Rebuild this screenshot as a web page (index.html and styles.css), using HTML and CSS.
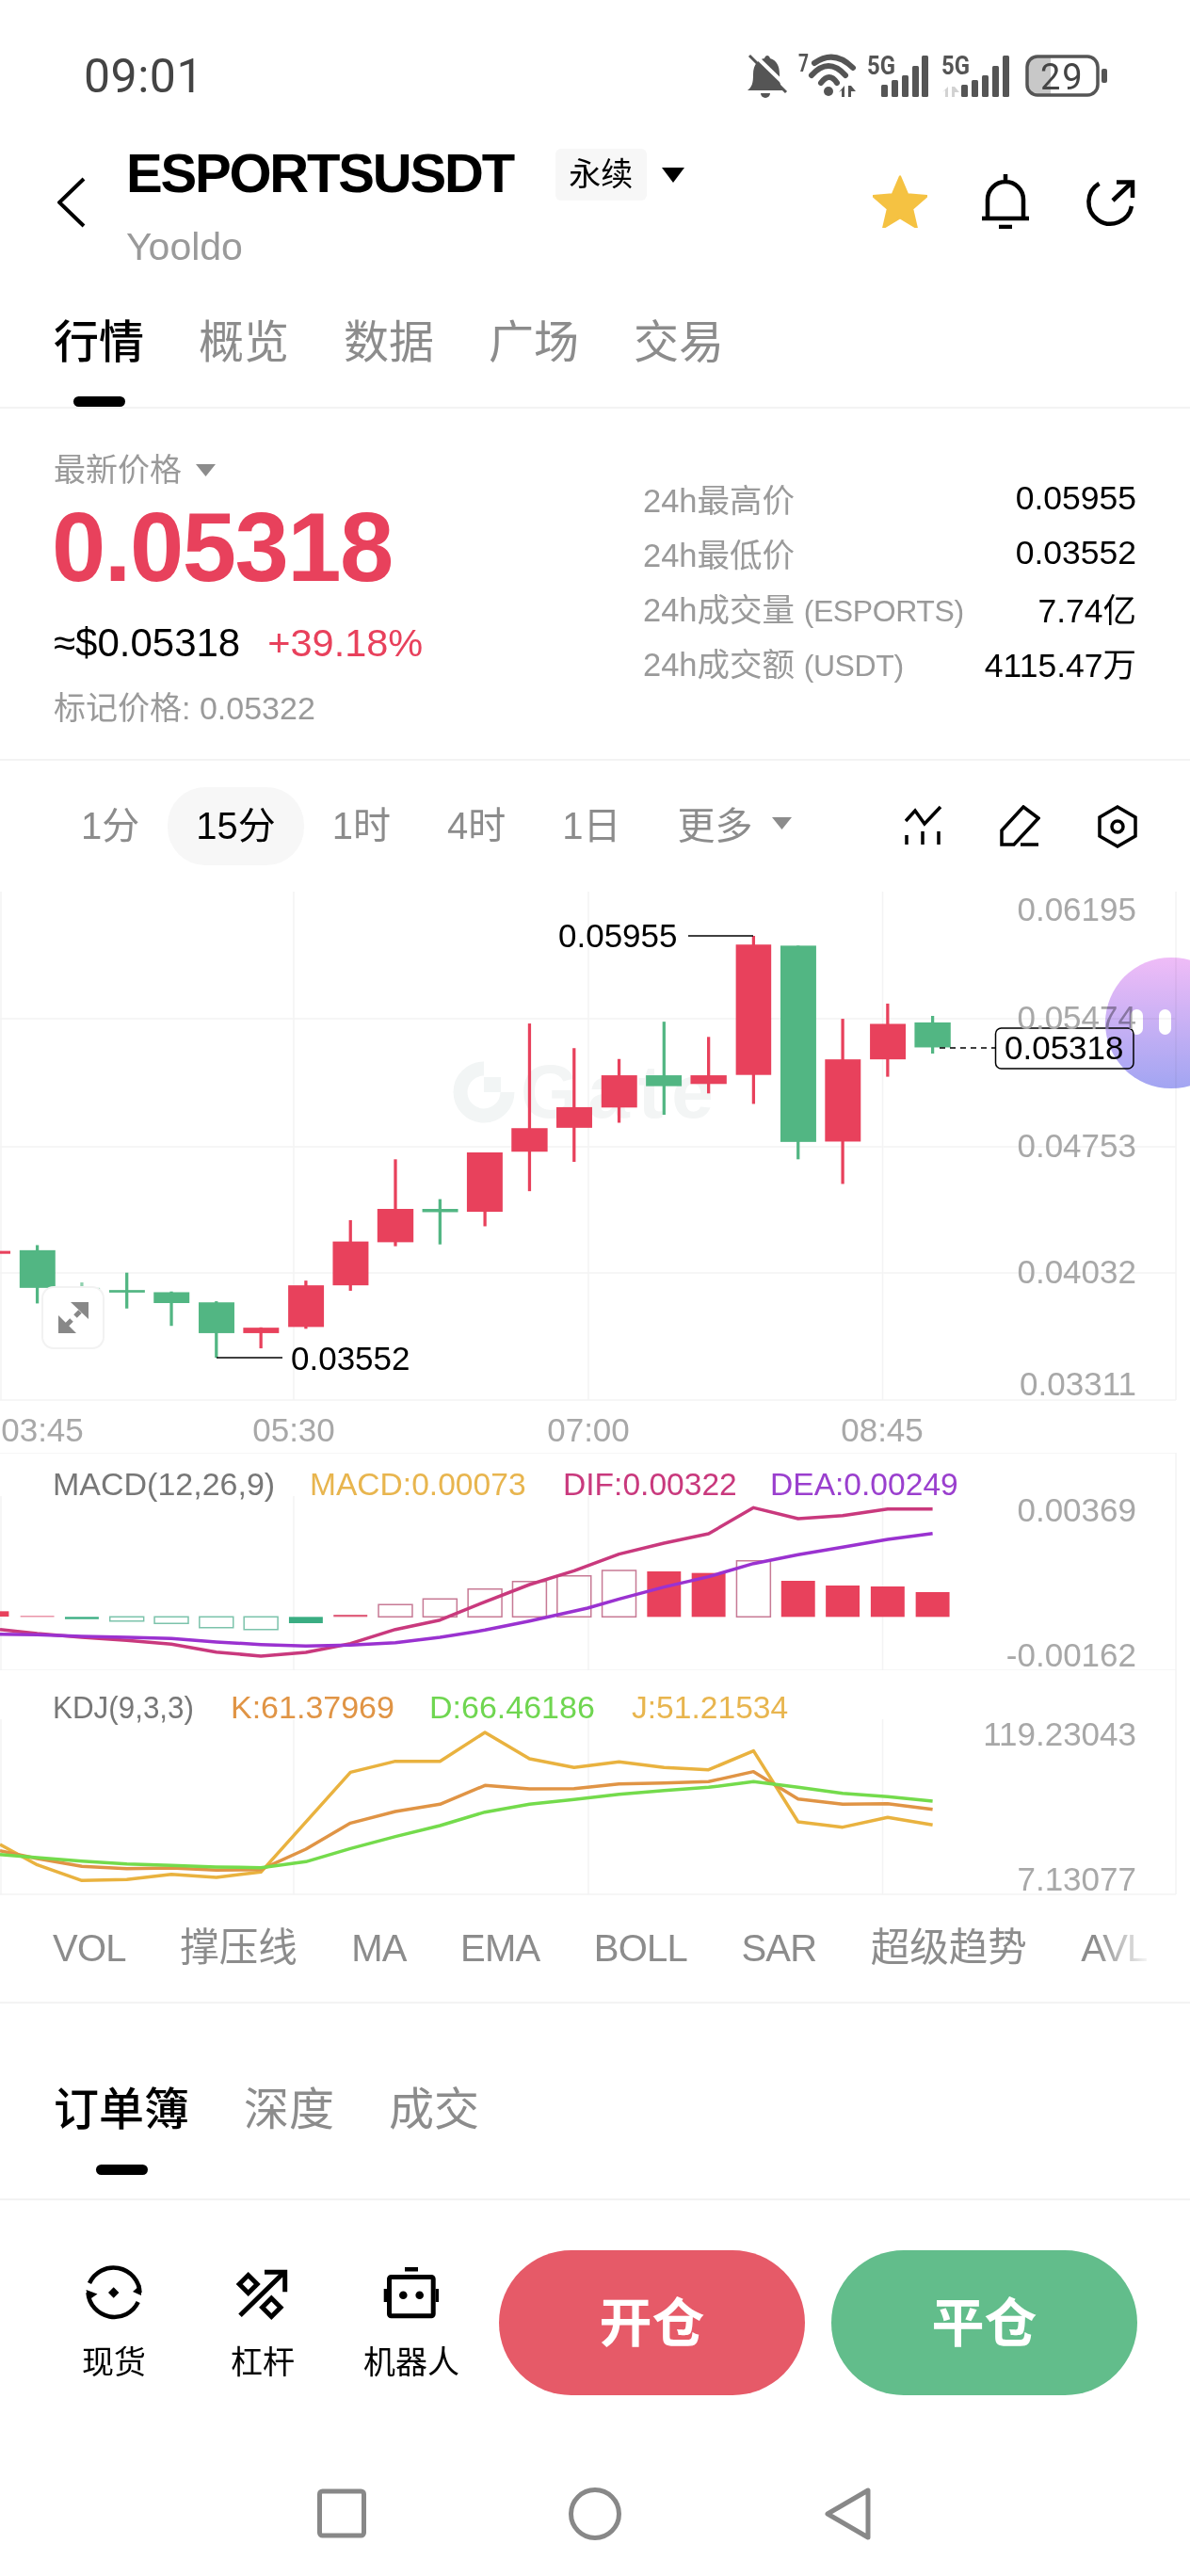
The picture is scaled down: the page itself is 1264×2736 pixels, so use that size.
FILE: index.html
```html
<!DOCTYPE html>
<html lang="zh">
<head>
<meta charset="utf-8">
<title>ESPORTSUSDT</title>
<link rel="stylesheet" href="styles.css">
</head>
<body>
<div class="page">
  <div class="status">
    <span class="time">09:01</span>
    <svg class="status-icons" width="390" height="52" viewBox="0 0 390 52">
      <path class="si" d="M5 41C10 37 11 33 11 24 11 13 17 8 23 7 24 3 28 3 29 7 36 9 39 15 39 24 39 33 40 37 43 41Z"/>
      <path class="si" d="M19 44a5 5 0 0 0 10 0z"/>
      <path class="si-cut" d="M11 2 49 39"/>
      <path class="si-line" d="M7 4 46 43"/>
      <text class="si-t" x="59" y="21" textLength="11" lengthAdjust="spacingAndGlyphs">7</text>
      <path class="si-arc" d="M76 12Q97 -3 117 17"/>
      <path class="si-arc" d="M73 25Q91 5 109 25"/>
      <path class="si-arc" d="M83 33Q92 21 100 33"/>
      <circle class="si" cx="91" cy="42" r="5"/>
      <path class="si" d="M108 36v12h-3v-7l-3 2zM112 36h3l5 6-5 0v6h-3z"/>
      <text class="si-5g" x="132" y="24" textLength="30" lengthAdjust="spacingAndGlyphs">5G</text>
      <rect class="si" x="147" y="35" width="7" height="13" rx="1.500"/>
      <rect class="si" x="158" y="30" width="7" height="18" rx="1.500"/>
      <rect class="si" x="169" y="25" width="7" height="23" rx="1.500"/>
      <rect class="si" x="180" y="15" width="7" height="33" rx="1.500"/>
      <rect class="si" x="190" y="4" width="7" height="44" rx="1.500"/>
      <text class="si-5g" x="211" y="24" textLength="30" lengthAdjust="spacingAndGlyphs">5G</text>
      <path class="si-soft" d="M218 37v11h-3v-7l-3 2zM222 37h3l5 6-5 0v5h-3z"/>
      <rect class="si" x="232" y="35" width="7" height="13" rx="1.500"/>
      <rect class="si" x="243" y="30" width="7" height="18" rx="1.500"/>
      <rect class="si" x="254" y="25" width="7" height="23" rx="1.500"/>
      <rect class="si" x="265" y="15" width="7" height="33" rx="1.500"/>
      <rect class="si" x="276" y="4" width="7" height="44" rx="1.500"/>
      <path class="si-fill" d="M314 6H327V45H314A11 11 0 0 1 303 34V17A11 11 0 0 1 314 6Z"/>
      <rect class="si-batt" x="302" y="5" width="75" height="41" rx="11"/>
      <text class="si-29" x="316" y="40">29</text>
      <rect class="si" x="381" y="18" width="6" height="15" rx="2"/>
    </svg>
  </div>

  <div class="head">
    <svg class="back" width="30" height="54" viewBox="0 0 30 54"><path d="M28 2 2 27 28 52"/></svg>
    <div class="ident">
      <div class="ident-row">
        <span class="name">ESPORTSUSDT</span>
        <span class="tag">永续</span>
        <svg class="caret-dark" width="24" height="16" viewBox="0 0 24 16"><path d="M0 0H24L12 16Z"/></svg>
      </div>
      <div class="sub">Yooldo</div>
    </div>
    <div class="head-actions">
      <svg width="58" height="56" viewBox="2 1.5 20 19.5"><path class="star" d="M12 17.27 18.18 21l-1.64-7.03L22 9.24l-7.19-.61L12 2 9.19 8.63 2 9.24l5.46 4.73L5.82 21z"/></svg>
      <svg class="ico" width="50" height="58" viewBox="0 0 50 58"><path d="M6 47V27a19 19 0 0 1 38 0V47M0 47H50M25 0V8"/><path d="M18 56H32"/></svg>
      <svg class="ico share" width="54" height="54" viewBox="0 0 54 54"><path d="M14.500 5A23 23 0 1 0 49 29M29 23 49 4M33 3.500H50V20"/></svg>
    </div>
  </div>

  <div class="tabs main-tabs">
    <div class="tab active"><span>行情</span><i class="bar"></i></div>
    <div class="tab"><span>概览</span></div>
    <div class="tab"><span>数据</span></div>
    <div class="tab"><span>广场</span></div>
    <div class="tab"><span>交易</span></div>
  </div>

  <div class="price">
    <div class="price-left">
      <div class="latest">最新价格<svg class="caret-grey" width="21" height="13" viewBox="0 0 21 13"><path d="M0 0H21L10.500 13Z"/></svg></div>
      <div class="big">0.05318</div>
      <div class="usd"><span>≈$0.05318</span><span class="up">+39.18%</span></div>
      <div class="mark">标记价格: 0.05322</div>
    </div>
    <div class="price-right">
      <div class="stat"><span>24h最高价</span><b>0.05955</b></div>
      <div class="stat"><span>24h最低价</span><b>0.03552</b></div>
      <div class="stat"><span>24h成交量 <i class="paren">(ESPORTS)</i></span><b>7.74亿</b></div>
      <div class="stat"><span>24h成交额 <i class="paren">(USDT)</i></span><b>4115.47万</b></div>
    </div>
  </div>

  <div class="intervals">
    <span class="iv">1分</span>
    <span class="iv on">15分</span>
    <span class="iv">1时</span>
    <span class="iv">4时</span>
    <span class="iv">1日</span>
    <span class="iv more">更多<svg class="caret-grey" width="21" height="13" viewBox="0 0 21 13"><path d="M0 0H21L10.500 13Z"/></svg></span>
    <div class="iv-icons">
      <svg class="ico thin" width="40" height="45" viewBox="0 0 40 45"><path d="M1 17 11 6 21 20 38 2M2 32V42M19 28V42M36 28V42"/></svg>
      <svg class="ico thin" width="43" height="45" viewBox="0 0 43 45"><path d="M25 2 41 14 15 42H2V27ZM22 42H41"/></svg>
      <svg class="ico thin" width="42" height="46" viewBox="0 0 42 46"><path d="M21 2 40 13V33L21 44 2 33V13Z"/><circle cx="21" cy="23" r="6"/></svg>
    </div>
  </div>

  <div class="panel main-panel">
    <svg class="chart" width="1264" height="596" viewBox="0 0 1264 596">
      <g class="grid">
        <path d="M1 0V540M312 0V540M625 0V540M937.500 0V540M1249 0V540"/>
        <path d="M0 135H1249M0 271H1249M0 405H1249M0 540H1249"/>
      </g>
      <g class="wm">
        <path class="wm-ring" d="M514 188A25 25 0 1 0 539 213"/>
        <path class="wm-q" d="M514 197H532V213H514Z"/>
        <text class="wm-t" x="553" y="240">Gate</text>
      </g>
      <g transform="translate(0,-8) scale(.40816,.38462)">
        <g class="red">
          <rect x="-67" y="1013" width="94" height="8"/>
          <rect x="675" y="1224" width="8" height="58"/><rect x="633" y="1225" width="93" height="15"/>
          <rect x="792" y="1095" width="8" height="133"/><rect x="750" y="1108" width="93" height="115"/>
          <rect x="908" y="928" width="8" height="195"/><rect x="866" y="987" width="93" height="121"/>
          <rect x="1025" y="760" width="8" height="240"/><rect x="982" y="897" width="94" height="92"/>
          <rect x="1258" y="741" width="8" height="204"/><rect x="1215" y="741" width="93" height="164"/>
          <rect x="1374" y="385" width="8" height="463"/><rect x="1331" y="674" width="94" height="65"/>
          <rect x="1490" y="453" width="8" height="314"/><rect x="1448" y="616" width="93" height="57"/>
          <rect x="1607" y="483" width="8" height="176"/><rect x="1565" y="528" width="93" height="89"/>
          <rect x="1840" y="422" width="8" height="156"/><rect x="1797" y="528" width="94" height="24"/>
          <rect x="1957" y="143" width="8" height="464"/><rect x="1915" y="167" width="92" height="360"/>
          <rect x="2189" y="372" width="8" height="456"/><rect x="2147" y="484" width="93" height="227"/>
          <rect x="2306" y="330" width="8" height="202"/><rect x="2264" y="386" width="93" height="98"/>
        </g>
        <g class="green">
          <rect x="93" y="997" width="8" height="161"/><rect x="51" y="1011" width="93" height="104"/>
          <g class="soft"><rect x="209" y="1100" width="8" height="43"/><rect x="167" y="1115" width="93" height="5"/></g>
          <rect x="326" y="1073" width="8" height="99"/><rect x="284" y="1121" width="93" height="7"/>
          <rect x="442" y="1125" width="8" height="95"/><rect x="400" y="1127" width="93" height="30"/>
          <rect x="559" y="1152" width="8" height="156"/><rect x="517" y="1155" width="93" height="85"/>
          <rect x="1141" y="870" width="8" height="125"/><rect x="1099" y="897" width="93" height="9"/>
          <rect x="1724" y="380" width="8" height="257"/><rect x="1681" y="528" width="93" height="30"/>
          <rect x="2073" y="170" width="8" height="590"/><rect x="2031" y="170" width="93" height="542"/>
          <rect x="2423" y="364" width="8" height="104"/><rect x="2380" y="382" width="94" height="69"/>
        </g>
      </g>
      <text class="ann" x="593" y="59">0.05955</text>
      <path class="ann-line" d="M731 47H800"/>
      <text class="ann" x="309" y="508">0.03552</text>
      <path class="ann-line" d="M230 495H300"/>
      <path class="dash" d="M998 166H1057"/>
      <rect class="last-box" x="1057.500" y="145" width="146.500" height="43" rx="6"/>
      <text class="ann" x="1067" y="178">0.05318</text>
      <g class="axis end">
        <text x="1207" y="31">0.06195</text>
        <text x="1207" y="146">0.05474</text>
        <text x="1207" y="282">0.04753</text>
        <text x="1207" y="416">0.04032</text>
        <text x="1207" y="535">0.03311</text>
      </g>
      <g class="axis mid">
        <text x="45" y="584">03:45</text>
        <text x="312" y="584">05:30</text>
        <text x="625" y="584">07:00</text>
        <text x="937" y="584">08:45</text>
      </g>
    </svg>
    <div class="expand">
      <svg width="32" height="33" viewBox="0 0 32 33"><path class="ex-h" d="M13 0H32V18ZM0 33V14L19 33Z"/><path class="ex-s" d="M23 10 18 15M14 19 9 24"/></svg>
    </div>
    <div class="bubble"><i></i><i></i></div>
  </div>

  <div class="panel">
    <svg class="chart" width="1264" height="231" viewBox="0 0 1264 231">
      <g class="grid">
        <path d="M0 0H1249M0 231H1249M1 46V231M312 46V231M625 46V231M937.500 46V231M1249 0V231"/>
      </g>
      <g transform="translate(0,-14) scale(.40816,.33333)">
        <g class="bar-r">
          <rect x="-65" y="547" width="88" height="17"/>
          <rect x="1684" y="420" width="88" height="145"/>
          <rect x="1800" y="425" width="88" height="140"/>
          <rect x="2033" y="450" width="88" height="115"/>
          <rect x="2149" y="465" width="88" height="100"/>
          <rect x="2266" y="468" width="88" height="97"/>
          <rect x="2383" y="486" width="88" height="79"/>
        </g>
        <g class="bar-rl">
          <rect x="53" y="562" width="88" height="3"/>
          <rect x="868" y="558" width="88" height="7"/>
        </g>
        <g class="hollow-r">
          <rect x="985" y="526" width="88" height="39"/>
          <rect x="1101" y="508" width="88" height="57"/>
          <rect x="1218" y="476" width="88" height="89"/>
          <rect x="1334" y="452" width="88" height="113"/>
          <rect x="1450" y="434" width="88" height="131"/>
          <rect x="1567" y="417" width="88" height="148"/>
          <rect x="1917" y="386" width="88" height="179"/>
        </g>
        <g class="bar-g">
          <rect x="169" y="565" width="88" height="7"/>
          <rect x="752" y="565" width="88" height="20"/>
        </g>
        <g class="hollow-g">
          <rect x="286" y="565" width="88" height="13"/>
          <rect x="402" y="565" width="88" height="21"/>
          <rect x="519" y="565" width="88" height="34"/>
          <rect x="635" y="565" width="88" height="40"/>
        </g>
        <polyline class="ln dif" points="0,605 97,618 213,630 330,640 446,652 563,677 679,690 796,678 912,650 1029,605 1145,575 1262,517 1378,462 1494,418 1611,365 1728,330 1844,300 1961,217 2077,252 2193,242 2310,221 2427,221"/>
        <polyline class="ln dea" points="0,620 97,622 213,627 330,630 446,634 563,645 679,653 796,658 912,655 1029,647 1145,630 1262,607 1378,578 1529,537 1611,508 1728,470 1844,437 1961,395 2077,367 2193,343 2310,318 2427,299"/>
      </g>
      <text class="ttl" x="56" y="45">MACD(12,26,9)</text>
      <text class="t-y" x="329" y="45">MACD:0.00073</text>
      <text class="t-p" x="598" y="45">DIF:0.00322</text>
      <text class="t-v" x="818" y="45">DEA:0.00249</text>
      <g class="axis end">
        <text x="1207" y="73">0.00369</text>
        <text x="1207" y="227">-0.00162</text>
      </g>
    </svg>
  </div>

  <div class="panel">
    <svg class="chart" width="1264" height="240" viewBox="0 0 1264 240">
      <g class="grid">
        <path d="M0 238H1249M1 52V238M312 52V238M625 52V238M937.500 52V238M1249 0V238"/>
      </g>
      <g transform="translate(0,-245) scale(.40816,.33333)">
        <polyline class="ln j" points="0,1290 97,1355 213,1405 330,1402 446,1385 563,1395 679,1378 912,1060 1029,1025 1145,1025 1262,933 1378,1017 1494,1045 1611,1027 1728,1045 1844,1052 1961,992 2077,1218 2193,1235 2310,1204 2427,1228"/>
        <polyline class="ln k" points="0,1310 97,1335 213,1360 330,1367 446,1365 563,1372 679,1370 796,1305 912,1222 1029,1185 1145,1162 1262,1102 1378,1113 1494,1112 1611,1097 1728,1094 1844,1090 1961,1058 2077,1145 2193,1162 2310,1160 2427,1178"/>
        <polyline class="ln d" points="0,1322 97,1332 213,1343 330,1352 446,1357 563,1362 679,1364 796,1345 912,1303 1029,1265 1145,1230 1262,1187 1378,1162 1494,1147 1611,1130 1728,1118 1844,1108 1961,1090 2077,1108 2193,1127 2310,1138 2427,1152"/>
      </g>
      <text class="ttl" x="56" y="51" textLength="150" lengthAdjust="spacingAndGlyphs">KDJ(9,3,3)</text>
      <text class="t-o" x="245" y="51">K:61.37969</text>
      <text class="t-g" x="456" y="51">D:66.46186</text>
      <text class="t-y" x="671" y="51">J:51.21534</text>
      <g class="axis end">
        <text x="1207" y="80">119.23043</text>
        <text x="1207" y="234">7.13077</text>
      </g>
    </svg>
  </div>

  <div class="indicators">
    <span>VOL</span><span class="cjk">撑压线</span><span>MA</span><span>EMA</span><span>BOLL</span><span>SAR</span><span class="cjk">超级趋势</span><span>AVL</span>
  </div>

  <div class="tabs book-tabs">
    <div class="tab active"><span>订单簿</span><i class="bar"></i></div>
    <div class="tab"><span>深度</span></div>
    <div class="tab"><span>成交</span></div>
  </div>

  <div class="actions">
    <div class="act">
      <svg class="ico" width="60" height="60" viewBox="0 0 60 60"><path d="M4 20A28 28 0 0 1 57.500 30M55.700 40A28 28 0 0 1 2.500 30"/><path class="fill" d="M50 29 58.500 21.500 59 33ZM.5 27 12.500 31.500 3 38ZM29.700 24.300 35.400 30 29.700 35.700 24 30Z"/></svg>
      <span>现货</span>
    </div>
    <div class="act">
      <svg class="ico bold" width="60" height="60" viewBox="0 0 60 60"><path d="M14.700 11.500 24.200 21 14.700 30.500 5.200 21ZM39.300 36 49 45.700 39.300 55.400 29.600 45.700ZM6 54.300 52 9.300M32 8.300H53.700V29.300"/></svg>
      <span>杠杆</span>
    </div>
    <div class="act">
      <svg class="ico bold" width="60" height="60" viewBox="0 0 60 60"><rect x="6.500" y="13.500" width="46.700" height="41.300" rx="2"/><path class="fill" d="M23 3H37V7.500H23ZM.7 26H4V40H.7ZM55.700 26H59V40H55.700Z"/><circle class="fill" cx="21.300" cy="32.700" r="4.300"/><circle class="fill" cx="38.700" cy="32.700" r="4.300"/></svg>
      <span>机器人</span>
    </div>
    <div class="btn open"><span>开仓</span></div>
    <div class="btn close"><span>平仓</span></div>
  </div>

  <div class="nav">
    <div class="nav-item"><svg width="52" height="54" viewBox="0 0 52 54"><rect x="2.500" y="4" width="47" height="47" rx="3"/></svg></div>
    <div class="nav-item"><svg width="56" height="56" viewBox="0 0 56 56"><circle cx="28" cy="28" r="25.500"/></svg></div>
    <div class="nav-item"><svg width="50" height="56" viewBox="0 0 50 56"><path d="M46 3V53L3 28Z"/></svg></div>
  </div>
</div>
</body>
</html>
```

FILE: styles.css
```css
* { box-sizing: border-box; }
html, body { margin: 0; padding: 0; background: #fff; }
body {
  font-family: "Liberation Sans", "Noto Sans CJK SC", sans-serif;
  color: #000;
  overflow: hidden;
}
.page { width: 1264px; height: 2736px; overflow: hidden; position: relative; }

/* status bar */
.status { height: 150px; display: flex; justify-content: space-between; align-items: flex-start; padding: 51px 85px 0 89px; }
.time { font-family: Roboto, sans-serif; font-size: 50px; line-height: 60px; font-weight: 400; color: #444; letter-spacing: .5px; }
.status-icons { margin-top: 4px; display: block; }
.si { fill: #555; }
.si-soft { fill: #d2d2d2; }
.si-cut { stroke: #fff; stroke-width: 4; fill: none; }
.si-line { stroke: #555; stroke-width: 3; fill: none; }
.si-arc { stroke: #555; stroke-width: 6; fill: none; stroke-linecap: round; }
.si-t { font-family: Roboto, sans-serif; font-weight: 700; font-size: 25px; fill: #555; }
.si-5g { font-family: Roboto, sans-serif; font-weight: 700; font-size: 27px; fill: #555; }
.si-fill { fill: #c8c8c8; }
.si-batt { fill: none; stroke: #555; stroke-width: 3.500; }
.si-29 { font-family: Roboto, sans-serif; font-size: 38px; fill: #444; letter-spacing: 2px; }

/* header */
.head { display: flex; align-items: flex-start; padding: 8px 57px 0 61px; }
.back { margin: 30px 43px 0 0; flex: none; }
.back path { fill: none; stroke: #000; stroke-width: 4; }
.ident { flex: none; }
.ident-row { display: flex; align-items: center; height: 55px; }
.name { font-size: 58px; line-height: 50px; font-weight: 700; letter-spacing: -2.200px; margin-top: -3px; }
.tag { width: 97px; height: 55px; margin-left: 45px; background: #f7f7f7; border-radius: 6px; font-size: 34px; line-height: 55px; text-align: center; }
.caret-dark { margin-left: 16px; }
.caret-dark path { fill: #000; }
.sub { margin-top: 26px; font-size: 41px; line-height: 46px; color: #9a9a9a; }
.head-actions { margin: 27px 0 0 auto; display: flex; align-items: center; height: 58px; gap: 58px; }
.share { margin: 6px 0 0 2px; }
.star { fill: #f5c242; stroke: #f5c242; stroke-width: .8; stroke-linejoin: round; }
.ico { display: block; }
.ico path, .ico rect, .ico circle { fill: none; stroke: #000; stroke-width: 4.500; }
.ico.thin path, .ico.thin circle { stroke-width: 3.500; }
.ico.bold path, .ico.bold rect { stroke-width: 5; }
.ico path.fill, .ico circle.fill { fill: #000; stroke: none; }

/* tabs */
.tabs { display: flex; gap: 58px; padding-left: 57px; border-bottom: 2px solid #f3f3f3; }
.main-tabs { padding-top: 47px; height: 149px; }
.book-tabs { padding-top: 81px; height: 209px; }
.tab { display: flex; flex-direction: column; align-items: center; font-size: 48px; line-height: 64px; color: #8c8c8c; }
.tab.active { color: #000; font-weight: 500; }
.bar { display: block; width: 55px; height: 11px; margin-top: 25px; border-radius: 6px; background: #000; }
.book-tabs .bar { margin-top: 26px; }

/* price */
.price { display: flex; height: 374px; border-bottom: 2px solid #f3f3f3; }
.price-left { flex: 1; padding: 42px 0 0 57px; }
.latest { display: flex; align-items: center; gap: 15px; font-size: 34px; line-height: 46px; color: #9a9a9a; }
.caret-grey path { fill: #8c8c8c; }
.big { margin: 8px 0 0 -2px; font-size: 103px; line-height: 104px; font-weight: 700; letter-spacing: -1.500px; color: #e8415c; }
.usd { display: flex; gap: 29px; margin-top: 24px; font-size: 42px; line-height: 50px; }
.up { color: #e8415c; font-size: 41.500px; }
.mark { margin-top: 22px; font-size: 34px; line-height: 44px; color: #9a9a9a; }
.price-right { width: 581px; padding: 66px 57px 0 0; }
.stat { display: flex; justify-content: space-between; height: 58px; align-items: center; font-size: 34.500px; color: #9a9a9a; }
.stat b { font-weight: 400; color: #000; font-size: 35.500px; }
.paren { font-style: normal; font-size: 32px; letter-spacing: -.4px; }

/* intervals */
.intervals { display: flex; align-items: center; height: 139px; padding: 28px 56px 28px 56px; font-size: 40px; color: #8c8c8c; }
.iv { display: flex; align-items: center; height: 83px; padding: 0 30px 7px; }
.iv.on { color: #000; background: #f7f7f7; border-radius: 40px; }
.more { gap: 20px; }
.iv-icons { margin-left: auto; display: flex; align-items: center; gap: 61px; }

/* charts */
.panel { position: relative; }
.chart { display: block; }
.grid path { fill: none; stroke: #f3f3f4; stroke-width: 1.500; }
.wm-ring { fill: none; stroke: #f2f5f5; stroke-width: 15; }
.wm-q { fill: #f2f5f5; }
.wm-t { font-size: 80px; font-weight: 700; fill: #f3f5f5; letter-spacing: 9px; }
.red rect { fill: #e8415c; }
.green rect { fill: #52b683; }
.soft rect { fill: #8fd0ae; }
.ann { font-size: 35px; fill: #000; }
.ann-line { stroke: #000; stroke-width: 1.500; fill: none; }
.dash { stroke: #000; stroke-width: 1.500; stroke-dasharray: 6 5; fill: none; }
.last-box { fill: #fff; stroke: #000; stroke-width: 1.500; }
.axis text { font-size: 35px; fill: #a8a8a8; }
.axis.end { text-anchor: end; }
.axis.mid { text-anchor: middle; }
.expand { position: absolute; left: 44px; top: 419px; width: 67px; height: 67px; display: flex; align-items: center; justify-content: center; background: #fff; border: 2px solid #f2f2f2; border-radius: 13px; }
.ex-h { fill: #888; }
.ex-s { stroke: #888; stroke-width: 5; fill: none; }
.bubble { position: absolute; left: 1174px; top: 70px; width: 140px; height: 139px; border-radius: 70px; background: linear-gradient(#efbcf7, #a2a5f2); mix-blend-mode: multiply; }
.bubble i { position: absolute; top: 55px; width: 13px; height: 27px; border-radius: 7px; background: #fff; }
.bubble i:first-child { left: 27px; }
.bubble i:last-child { left: 57px; }

.bar-r rect { fill: #e8415c; }
.bar-rl rect { fill: #e0627e; }
.bar-g rect { fill: #3aad82; }
.hollow-r rect { fill: none; stroke: #c77a95; stroke-width: 1.500; vector-effect: non-scaling-stroke; }
.hollow-g rect { fill: none; stroke: #7cc3ab; stroke-width: 1.500; vector-effect: non-scaling-stroke; }
.ln { fill: none; stroke-width: 3.500; vector-effect: non-scaling-stroke; stroke-linejoin: round; }
.dif { stroke: #c9397d; }
.dea { stroke: #9a32d0; }
.j { stroke: #e9b23f; }
.k { stroke: #e09445; }
.d { stroke: #74db4c; }
.ttl, .t-o, .t-g { font-size: 34px; }
.t-y, .t-p, .t-v { font-size: 33.600px; }
.ttl { fill: #777; }
.t-y { fill: #e8b54e; }
.t-p { fill: #c9397d; }
.t-v { fill: #9a3fce; }
.t-o { fill: #e09445; }
.t-g { fill: #6fd650; }

/* indicators */
.indicators { position: relative; display: flex; gap: 57.500px; height: 114px; padding: 35px 0 0 56px; border-bottom: 2px solid #f3f3f3; font-size: 40px; line-height: 40px; color: #8c8c8c; white-space: nowrap; }
.indicators span { letter-spacing: -.8px; }
.indicators .cjk { font-size: 41.500px; letter-spacing: 0; }
.indicators::after { content: ""; position: absolute; right: 40px; top: 30px; width: 60px; height: 50px; background: linear-gradient(90deg, rgba(255,255,255,0), #fff); }

/* bottom actions */
.actions { display: flex; align-items: flex-start; height: 262px; padding: 53px 0 0 42px; }
.act { width: 158px; padding-top: 15px; display: flex; flex-direction: column; align-items: center; font-size: 34px; line-height: 44px; }
.act span { margin-top: 22px; }
.btn { width: 325px; height: 154px; border-radius: 77px; display: flex; align-items: center; justify-content: center; padding-bottom: 10px; color: #fff; font-size: 56px; font-weight: 700; }
.open { margin-left: 14px; background: #e65a68; }
.close { margin-left: 28px; background: #62bd8b; }

/* nav */
.nav { display: flex; justify-content: center; padding-top: 43px; }
.nav-item { width: 269px; display: flex; justify-content: center; }
.nav svg * { fill: none; stroke: #888; stroke-width: 5; stroke-linejoin: round; }
```
